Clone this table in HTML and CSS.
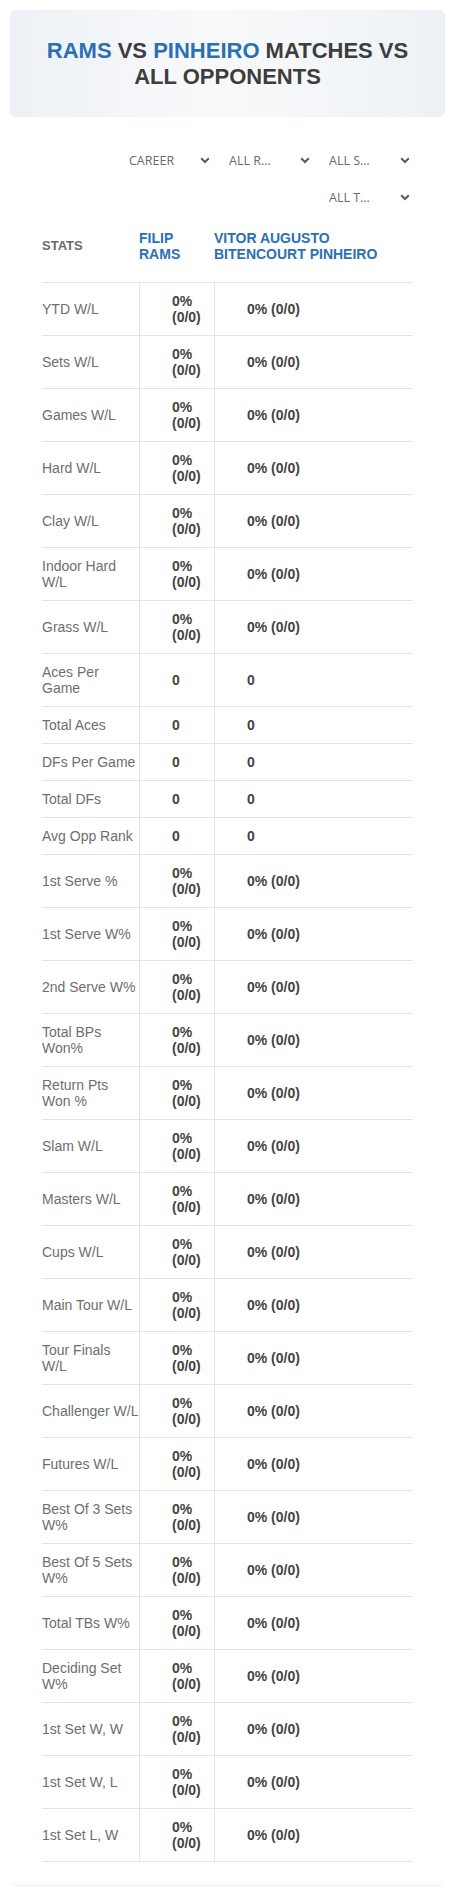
FILE: index.html
```html
<!DOCTYPE html>
<html lang="en">
<head>
  <meta charset="UTF-8">
  <title>Rams vs Pinheiro</title>
  <link rel="stylesheet" href="styles.css">
</head>
<body>

  <div class="page">

    <div class="title-box">
      <h1 class="title"><span class="blue">RAMS</span> VS <span class="blue">PINHEIRO</span> MATCHES VS ALL OPPONENTS</h1>
    </div>

    <div class="card">

      <!-- filters -->
      <div class="filters">
        <div class="dropdown"><span class="dropdown-text">CAREER</span><svg class="chevron" width="10" height="7" viewBox="0 0 10 7"><path d="M1.2 1.3 L5 5 L8.8 1.3" fill="none" stroke="#5a5a5a" stroke-width="2"/></svg></div>
        <div class="dropdown"><span class="dropdown-text">ALL ROUNDS</span><svg class="chevron" width="10" height="7" viewBox="0 0 10 7"><path d="M1.2 1.3 L5 5 L8.8 1.3" fill="none" stroke="#5a5a5a" stroke-width="2"/></svg></div>
        <div class="dropdown"><span class="dropdown-text">ALL SURFACES</span><svg class="chevron" width="10" height="7" viewBox="0 0 10 7"><path d="M1.2 1.3 L5 5 L8.8 1.3" fill="none" stroke="#5a5a5a" stroke-width="2"/></svg></div>
        <div class="dropdown"><span class="dropdown-text">ALL TOURNAMENTS</span><svg class="chevron" width="10" height="7" viewBox="0 0 10 7"><path d="M1.2 1.3 L5 5 L8.8 1.3" fill="none" stroke="#5a5a5a" stroke-width="2"/></svg></div>
      </div>

      <div class="stats-table">
        <div class="row head">
          <div class="cell stats-label">STATS</div>
          <div class="cell name">FILIP RAMS</div>
          <div class="cell name">VITOR AUGUSTO BITENCOURT PINHEIRO</div>
        </div>
      </div>

    </div>

  </div>

  <script>
    const rows = [
      ['YTD W/L', '0% (0/0)'], ['Sets W/L', '0% (0/0)'], ['Games W/L', '0% (0/0)'],
      ['Hard W/L', '0% (0/0)'], ['Clay W/L', '0% (0/0)'], ['Indoor Hard W/L', '0% (0/0)'],
      ['Grass W/L', '0% (0/0)'], ['Aces Per Game', '0'], ['Total Aces', '0'],
      ['DFs Per Game', '0'], ['Total DFs', '0'], ['Avg Opp Rank', '0'],
      ['1st Serve %', '0% (0/0)'], ['1st Serve W%', '0% (0/0)'], ['2nd Serve W%', '0% (0/0)'],
      ['Total BPs Won%', '0% (0/0)'], ['Return Pts Won %', '0% (0/0)'], ['Slam W/L', '0% (0/0)'],
      ['Masters W/L', '0% (0/0)'], ['Cups W/L', '0% (0/0)'], ['Main Tour W/L', '0% (0/0)'],
      ['Tour Finals W/L', '0% (0/0)'], ['Challenger W/L', '0% (0/0)'], ['Futures W/L', '0% (0/0)'],
      ['Best Of 3 Sets W%', '0% (0/0)'], ['Best Of 5 Sets W%', '0% (0/0)'], ['Total TBs W%', '0% (0/0)'],
      ['Deciding Set W%', '0% (0/0)'], ['1st Set W, W', '0% (0/0)'], ['1st Set W, L', '0% (0/0)'],
      ['1st Set L, W', '0% (0/0)']
    ];

    const tablo = document.querySelector('.stats-table');
    rows.forEach(r => {
      const row = document.createElement('div');
      row.className = 'row';
      row.innerHTML = `<div class="cell label">${r[0]}</div>` +
        `<div class="cell value">${r[1]}</div>` +
        `<div class="cell value">${r[1]}</div>`;
      tablo.appendChild(row);
    });
  </script>

</body>
</html>
```

FILE: styles.css
```css
body {
  margin: 0;
  font-family: "Liberation Sans", Arial, sans-serif;
  background-color: white;
}
.page {
  padding: 10px;
}
.title-box {
  background: linear-gradient(90deg, #edf1f5 0%, #f8f9fb 45%, #f6f8fa 60%, #edf1f5 100%);
  border-radius: 6px;
  padding: 28px 20px 27px;
  text-align: center;
}
.title {
  margin: 0;
  font-size: 22px;
  line-height: 26px;
  font-weight: bold;
  color: #3d3d3d;
}
.title .blue {
  color: #2b70b3;
}
.card {
  margin-top: 3px;
  padding: 25px 32px 23px;
  border-radius: 6px;
  box-shadow: 0 2px 2px -1px rgba(0,0,0,0.08);
}
.filters {
  display: flex;
  flex-wrap: wrap;
  justify-content: flex-end;
  row-gap: 7px;
}
.dropdown {
  width: 100px;
  height: 30px;
  box-sizing: border-box;
  padding: 0 3px 0 16px;
  display: flex;
  align-items: center;
  font-family: "Open Sans", sans-serif;
  font-size: 12.5px;
  color: #6b6b6b;
}
.dropdown-text {
  width: 47px;
  white-space: nowrap;
  overflow: hidden;
  text-overflow: ellipsis;
}
.chevron {
  margin-left: auto;
}
.row {
  display: grid;
  grid-template-columns: 97px 75px 1fr;
  border-bottom: 1px solid #e2e4e6;
}
.cell {
  padding: 10px 0;
  font-size: 14px;
  line-height: 16px;
}
.row.head .cell {
  padding: 18px 0 20px;
  display: flex;
  align-items: center;
}
.stats-label {
  font-size: 13px !important;
  font-weight: bold;
  color: #6a6a6a;
}
.name {
  font-weight: bold;
  color: #2b70b3;
}
.label {
  color: #6e6e6e;
  display: flex;
  align-items: center;
}
.value {
  border-left: 1px solid #e2e4e6;
  padding-left: 32px;
  font-weight: bold;
  color: #444;
  display: flex;
  align-items: center;
}
```
